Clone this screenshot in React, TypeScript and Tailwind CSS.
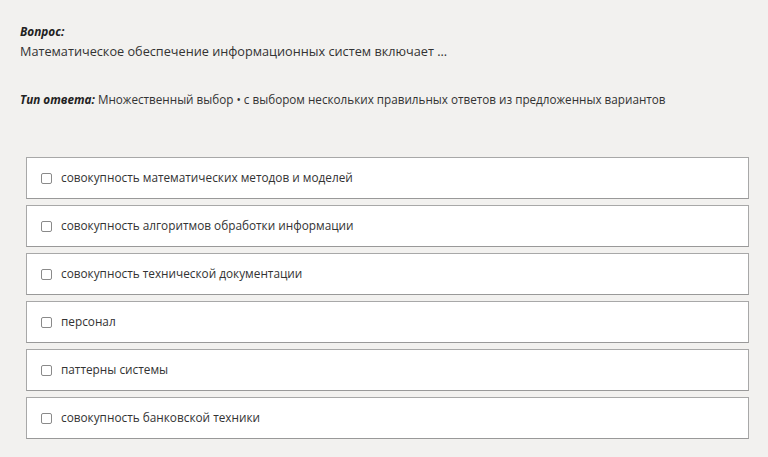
const options = [
  'совокупность математических методов и моделей',
  'совокупность алгоритмов обработки информации',
  'совокупность технической документации',
  'персонал',
  'паттерны системы',
  'совокупность банковской техники',
];

export default function App() {
  return (
    <div className="min-h-screen w-full bg-[#f2f1ef] text-[#333333] font-['Open_Sans',sans-serif]">
      <div className="pl-5 pt-[22px]">
        <p className="text-[11.8px] font-bold italic leading-[18px] text-[#222]">Вопрос:</p>
        <p className="text-[12.7px] leading-[22px]">
          Математическое обеспечение информационных систем включает ...
        </p>
        <p className="mt-[28px] text-[11.7px] leading-[18px]">
          <span className="font-bold italic text-[#222]">Тип ответа:</span> Множественный выбор • с
          выбором нескольких правильных ответов из предложенных вариантов
        </p>
      </div>
      <div className="ml-[26px] mt-[49px] flex w-[723px] flex-col gap-[6px]">
        {options.map((o) => (
          <label
            key={o}
            className="flex h-[42px] items-center border border-[#a8a8a8] border-b-[#999] bg-white pl-[14px]"
          >
            <span className="h-[11px] w-[11px] rounded-[2px] border border-[#8a8a8a] bg-white" />
            <span className="ml-[9px] text-[11.8px] text-[#333]">{o}</span>
          </label>
        ))}
      </div>
    </div>
  );
}
